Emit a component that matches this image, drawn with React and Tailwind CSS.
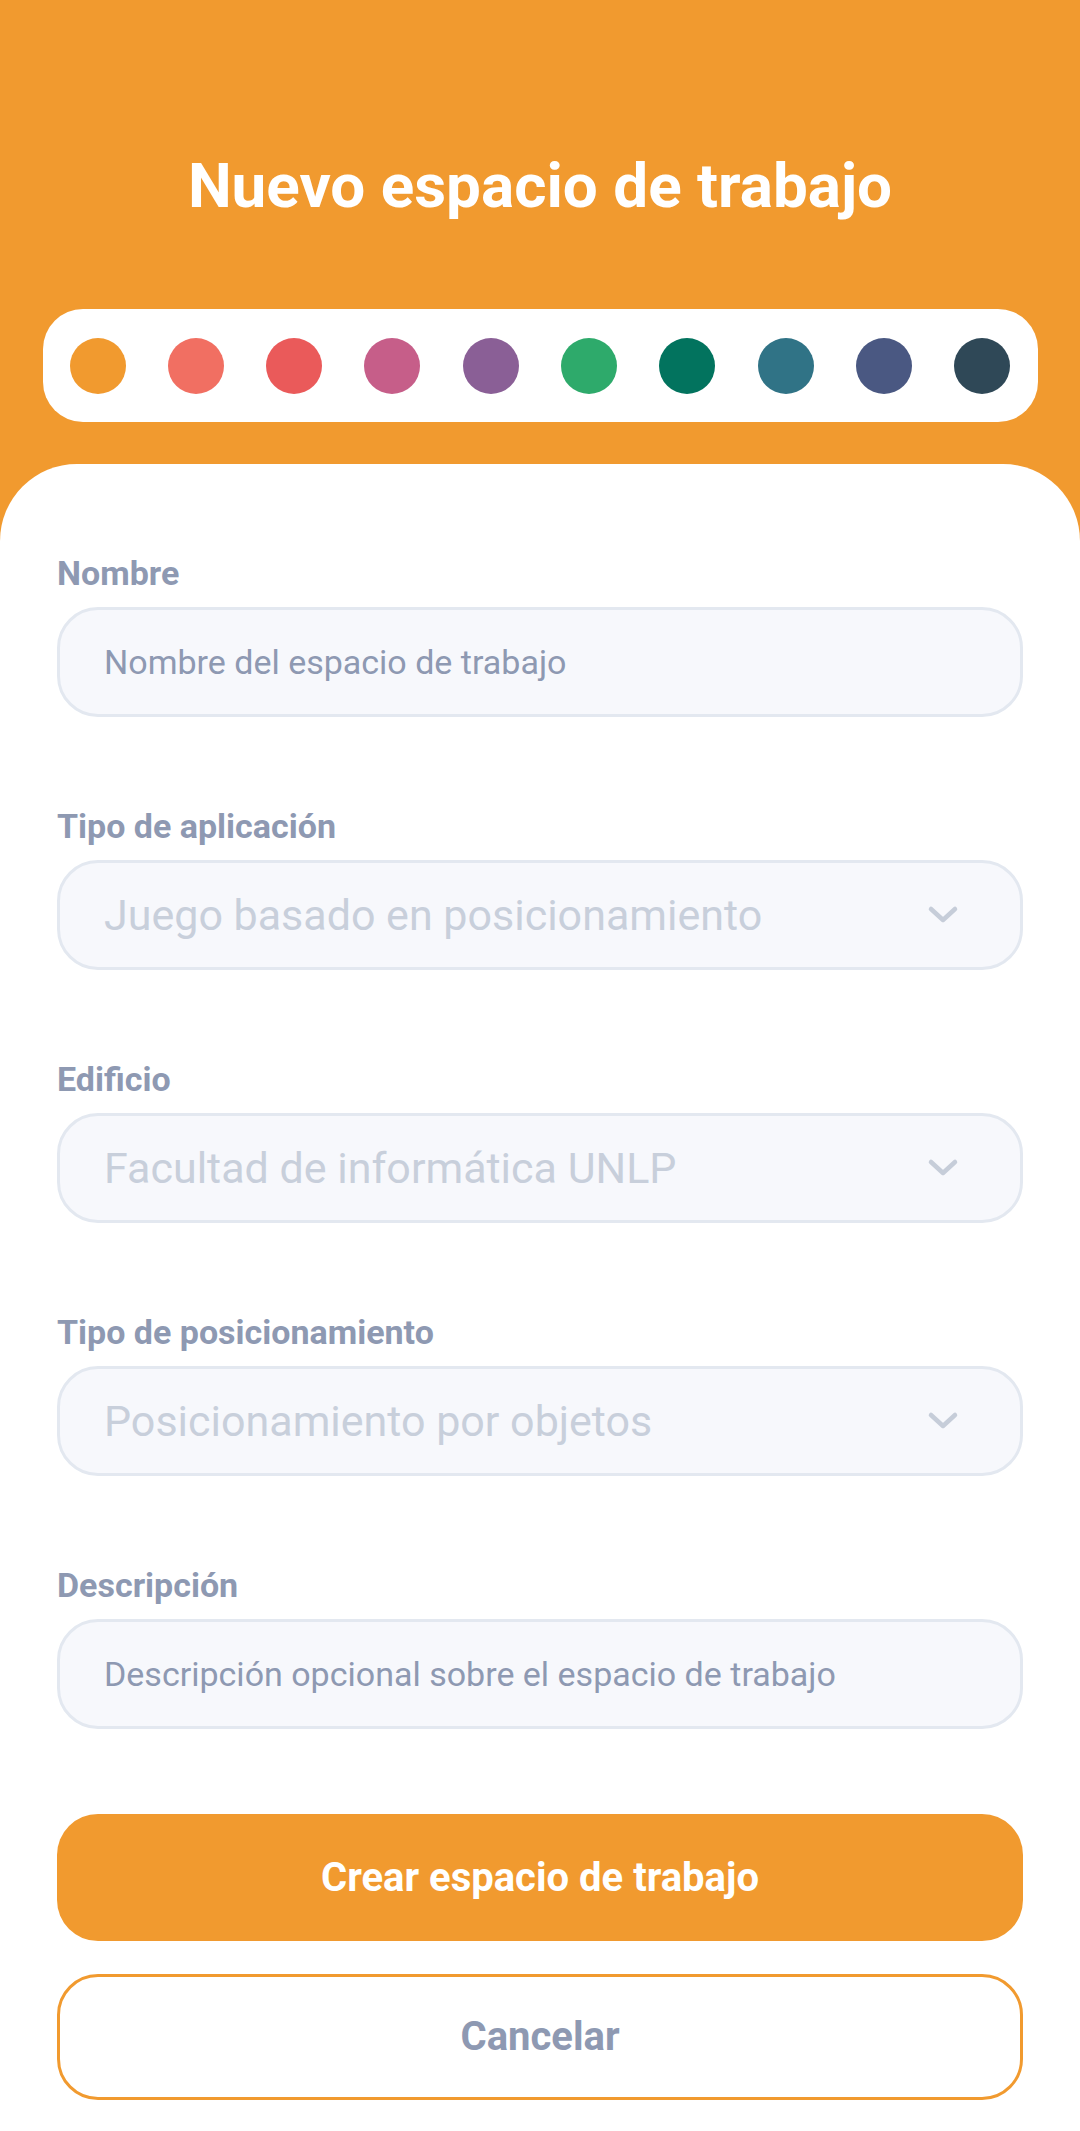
import { useState } from 'react'

const colors = [
  '#F19A2F',
  '#F16F62',
  '#EA5A5A',
  '#C65E89',
  '#8A5F96',
  '#2EAA6B',
  '#02735E',
  '#307386',
  '#4A5882',
  '#2F4857',
]

function Chevron() {
  return (
    <svg width="32" height="20" viewBox="0 0 32 20" fill="none" className="shrink-0">
      <path
        d="M4 4 L16 15 L28 4"
        stroke="#C6CDD9"
        strokeWidth="4.5"
        strokeLinecap="round"
        strokeLinejoin="round"
      />
    </svg>
  )
}

function Field({ label, children }) {
  return (
    <div className="flex flex-col">
      <label className="text-[34px] leading-[40px] font-bold text-[#8E99B2]">{label}</label>
      <div className="mt-[14px]">{children}</div>
    </div>
  )
}

function TextInput({ placeholder }) {
  return (
    <input
      type="text"
      placeholder={placeholder}
      className="w-full h-[110px] px-[44px] bg-[#F7F8FC] border-[3px] border-[#E3E8F0] rounded-[41px] text-[34px] text-[#4B5563] placeholder:text-[#8E99B2] outline-none"
    />
  )
}

function Select({ value }) {
  return (
    <div className="w-full h-[110px] pl-[44px] pr-[61px] bg-[#F7F8FC] border-[3px] border-[#E3E8F0] rounded-[41px] flex items-center justify-between">
      <span className="text-[43px] text-[#C8CFDB]">{value}</span>
      <Chevron />
    </div>
  )
}

export default function App() {
  const [selected, setSelected] = useState(0)

  return (
    <div className="min-h-[2131px] w-[1080px] bg-[#F19A2F] font-['Roboto','Liberation_Sans',sans-serif]">
      {/* Header */}
      <div className="pt-[150px] pb-[42px] flex flex-col items-center">
        <h1 className="text-[62px] leading-[72px] font-bold text-white">Nuevo espacio de trabajo</h1>
        <div className="mt-[87px] w-[995px] h-[113px] bg-white rounded-[40px] px-[27px] flex items-center justify-between">
          {colors.map((c, i) => (
            <button
              key={c}
              onClick={() => setSelected(i)}
              className="w-[56px] h-[56px] rounded-full"
              style={{ backgroundColor: c }}
              aria-pressed={selected === i}
            />
          ))}
        </div>
      </div>

      {/* Form sheet */}
      <div className="bg-white rounded-t-[77px] px-[57px] pt-[89px] pb-[33px]">
        <div className="flex flex-col gap-[89px]">
          <Field label="Nombre">
            <TextInput placeholder="Nombre del espacio de trabajo" />
          </Field>
          <Field label="Tipo de aplicación">
            <Select value="Juego basado en posicionamiento" />
          </Field>
          <Field label="Edificio">
            <Select value="Facultad de informática UNLP" />
          </Field>
          <Field label="Tipo de posicionamiento">
            <Select value="Posicionamiento por objetos" />
          </Field>
          <Field label="Descripción">
            <TextInput placeholder="Descripción opcional sobre el espacio de trabajo" />
          </Field>
        </div>

        <div className="mt-[85px] flex flex-col gap-[33px]">
          <button className="h-[127px] w-full rounded-[41px] bg-[#F19A2F] text-white text-[40px] font-bold">
            Crear espacio de trabajo
          </button>
          <button className="h-[126px] w-full rounded-[41px] border-[3px] border-[#F19A2F] bg-white text-[#8E99B2] text-[40px] font-bold">
            Cancelar
          </button>
        </div>
      </div>
    </div>
  )
}
